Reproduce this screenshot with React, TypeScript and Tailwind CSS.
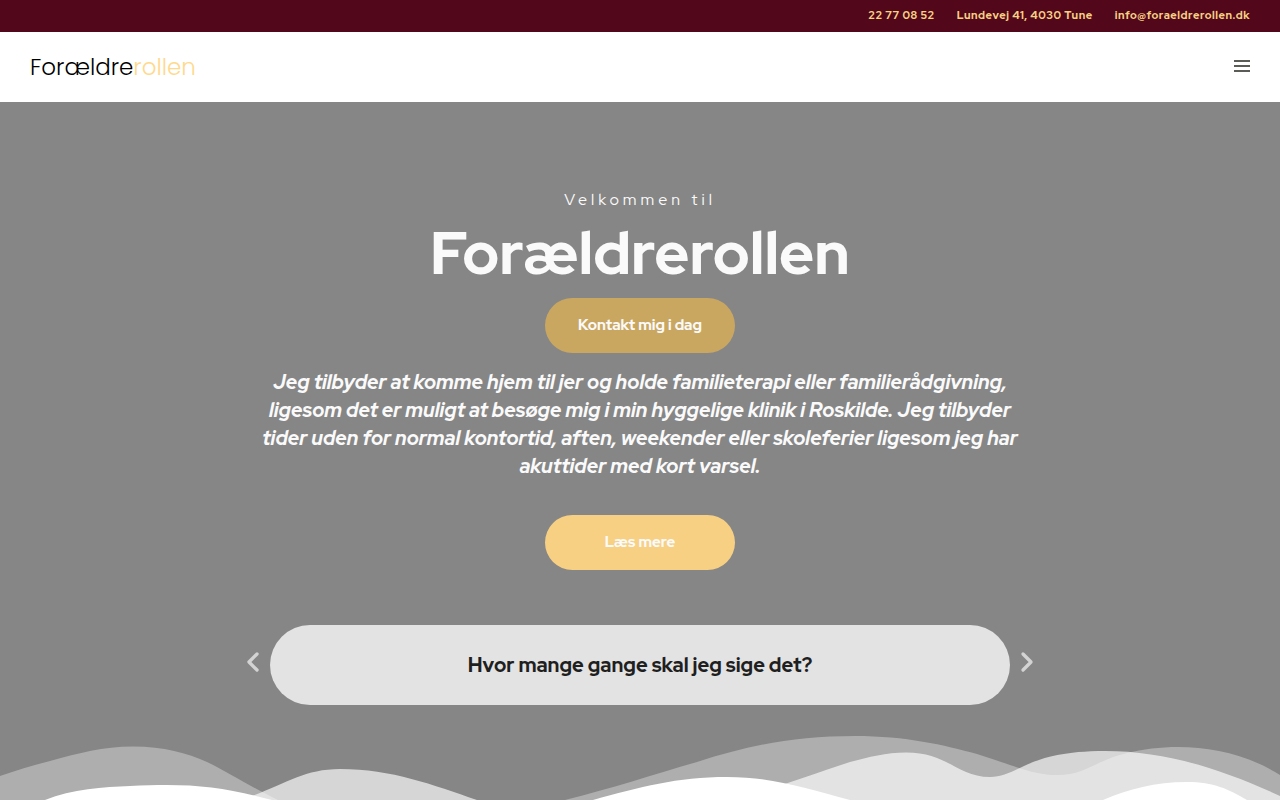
import { useState } from "react";
import { ChevronLeft, ChevronRight } from "lucide-react";

const quotes = [
  "Hvor mange gange skal jeg sige det?",
];

function TopBar() {
  return (
    <div className="flex h-8 items-center justify-end gap-[22px] bg-[#52071b] px-[30px] pb-px text-[11px] font-extrabold tracking-wider text-[#f7d083]">
      <a href="tel:22770852">22 77 08 52</a>
      <span>Lundevej 41, 4030 Tune</span>
      <a href="mailto:info@foraeldrerollen.dk">info@foraeldrerollen.dk</a>
    </div>
  );
}

function Header() {
  return (
    <header className="flex h-[70px] items-center justify-between bg-white px-[30px]">
      <a
        href="#"
        className="font-['Poppins','Lato',sans-serif] text-[23px] font-light text-black"
      >
        Forældre<span className="text-[#ffd98c]">rollen</span>
      </a>
      <button aria-label="Menu" className="flex flex-col gap-[3px] pb-0.5">
        <span className="h-0.5 w-4 bg-[#5c5c57]" />
        <span className="h-0.5 w-4 bg-[#5c5c57]" />
        <span className="h-0.5 w-4 bg-[#5c5c57]" />
      </button>
    </header>
  );
}

function Carousel() {
  const [index, setIndex] = useState(0);
  const step = (delta: number) =>
    setIndex((index + delta + quotes.length) % quotes.length);

  return (
    <div className="mt-[55px] flex w-full max-w-[800px] items-center">
      <button
        aria-label="Forrige"
        onClick={() => step(-1)}
        className="flex w-[30px] shrink-0 justify-center pr-1 pb-1.5 text-[#d3d3d3]"
      >
        <Arrow left />
      </button>
      <div className="flex h-20 grow items-center justify-center rounded-[40px] bg-[#e3e3e3] px-10 text-center text-[20px] font-extrabold text-[#1f1f1f]">
        {quotes[index]}
      </div>
      <button
        aria-label="Næste"
        onClick={() => step(1)}
        className="flex w-[30px] shrink-0 justify-center pb-1.5 pl-1 text-[#d3d3d3]"
      >
        <Arrow />
      </button>
    </div>
  );
}

function Arrow({ left = false }: { left?: boolean }) {
  const Icon = left ? ChevronLeft : ChevronRight;
  return <Icon className="size-8 shrink-0" strokeWidth={2.5} />;
}

function Waves() {
  return (
    <svg
      viewBox="0 736 1280 64"
      preserveAspectRatio="none"
      className="mt-[31px] block h-16 w-full"
      fill="#fff"
      aria-hidden="true"
    >
      <path
        fillOpacity="0.33"
        d="M0 776C18 770 34 765 50 761C80 753 102 746.500 133 746.500C164 746.500 187 753 207 762C230 773 247 785 278 800H0Z M565 800C613 788 652 775 697 762C750 745 795 736 855 736C906 736 944 745 977 754C1013 765 1032 775 1057 775C1086 775 1094 761 1127 753C1172 742 1231 744 1280 775V800Z"
      />
      <path
        fillOpacity="0.66"
        d="M240 800C282 787 301 769 340 769C392 769 433 785 477 800Z M735 800C784 785 808 776 850 762C869 757 886 752.500 906 752.500C948 752.500 957 777 990 777C1019 777 1025 751 1105 751C1165 751 1222 769 1280 796V800Z"
      />
      <path d="M45 800C72 789 104 787 130 786C189 783 220 786 272 800Z M593 800C640 787 677 777 727 777C773 777 804 788 850 800Z M1103 800C1129 789 1155 782 1187 782C1214 782 1228 789 1247 800Z" />
    </svg>
  );
}

function Hero() {
  return (
    <main className="flex flex-col items-center bg-[#868686] pt-[86px] text-[#fafafa]">
      <p className="text-[16px] leading-6 font-normal tracking-[4px]">
        Velkommen til
      </p>
      <h1 className="mt-2 text-[60px] leading-[66px] font-extrabold">
        Forældrerollen
      </h1>
      <button className="mt-3 h-[55px] w-[190px] rounded-full bg-[#caa761] text-[15px] font-extrabold">
        Kontakt mig i dag
      </button>
      <p className="mt-[15px] max-w-[780px] text-center text-[20px] leading-7 font-extrabold italic">
        Jeg tilbyder at komme hjem til jer og holde familieterapi eller
        familierådgivning, ligesom det er muligt at besøge mig i min hyggelige
        klinik i Roskilde. Jeg tilbyder tider uden for normal kontortid, aften,
        weekender eller skoleferier ligesom jeg har akuttider med kort varsel.
      </p>
      <button className="mt-[35px] h-[55px] w-[190px] rounded-full bg-[#f7d083] text-[15px] font-extrabold">
        Læs mere
      </button>
      <Carousel />
      <Waves />
    </main>
  );
}

export default function App() {
  return (
    <div className="min-h-screen bg-white font-['Red_Hat_Display','Inter',sans-serif]">
      <TopBar />
      <Header />
      <Hero />
    </div>
  );
}
